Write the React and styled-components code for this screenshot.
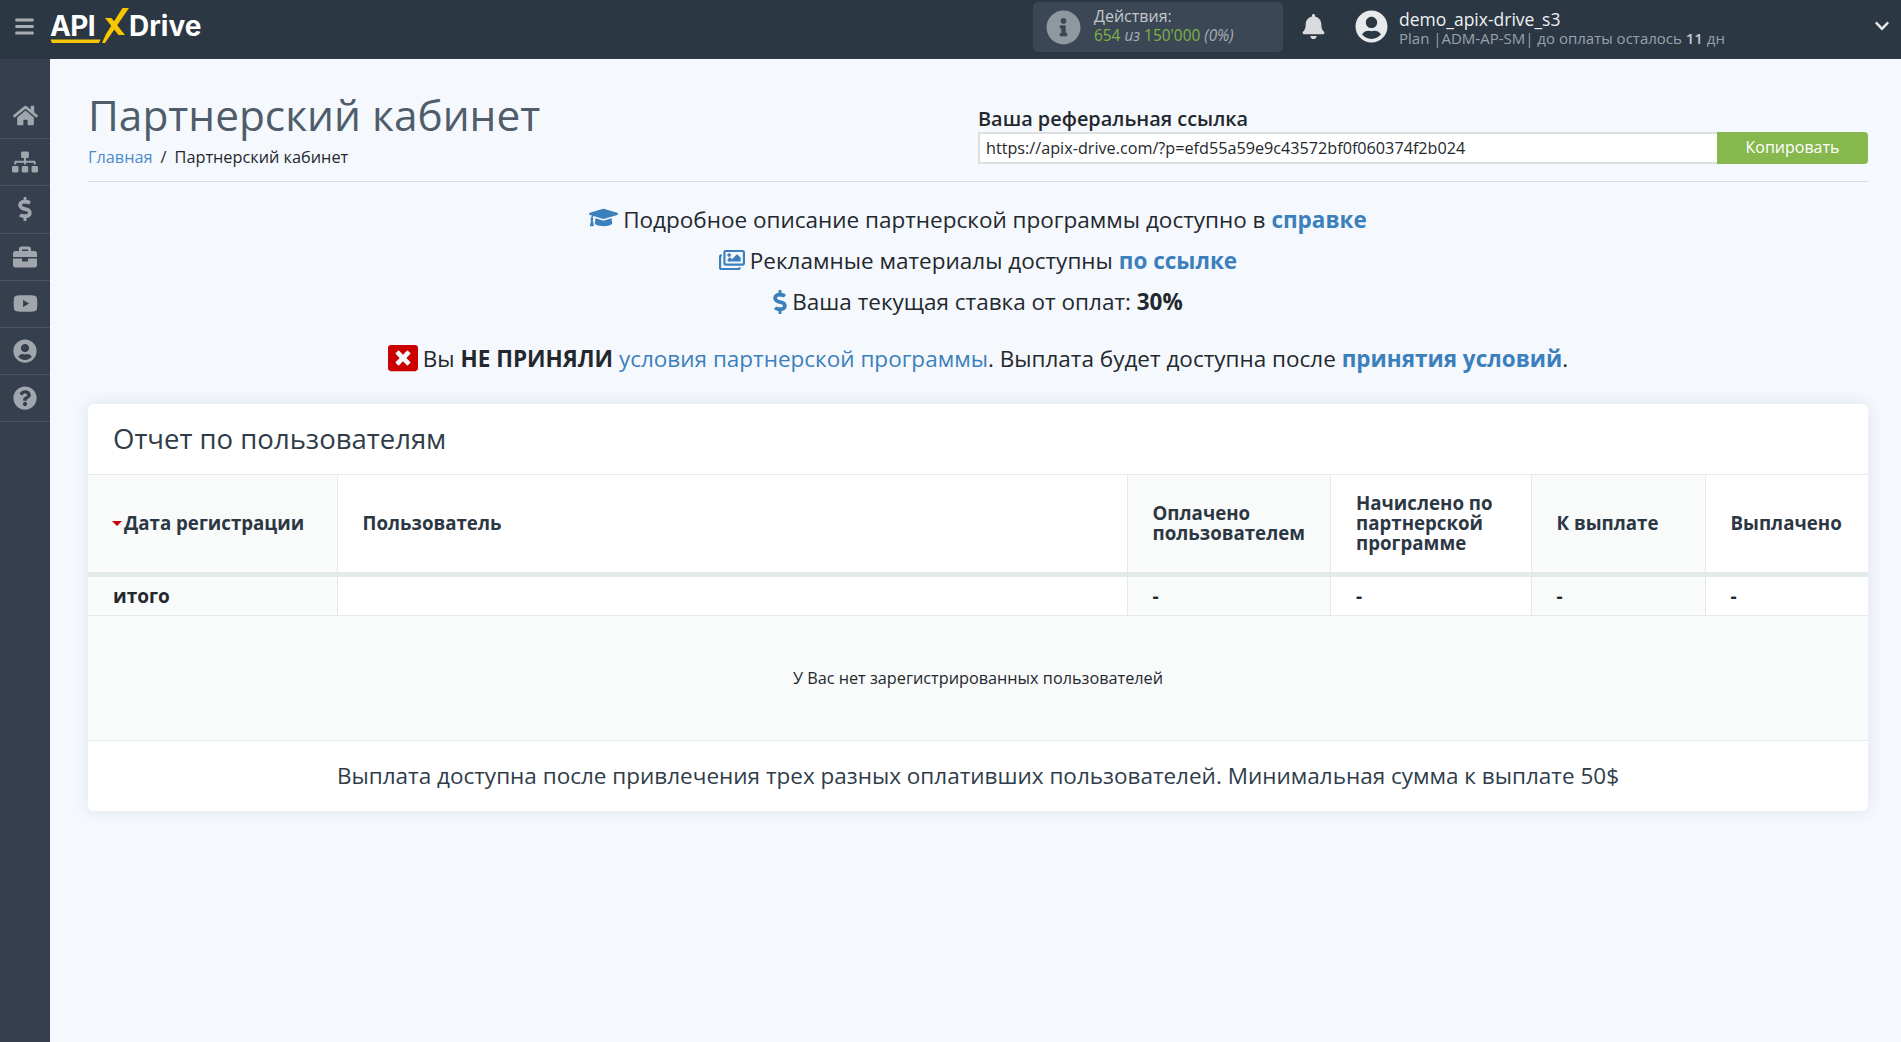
import React from "react";
import styled, { createGlobalStyle } from "styled-components";
import {
  FaBars, FaBell, FaBriefcase, FaChevronDown, FaDollarSign, FaGraduationCap, FaHome, FaInfoCircle,
  FaQuestionCircle, FaRegImages, FaSitemap, FaUserCircle, FaWindowClose, FaYoutube,
} from "react-icons/fa";

const Global = createGlobalStyle`
  html, body { margin: 0; padding: 0; height: 100%; }
  body { font-family: "Open Sans", "Noto Sans", sans-serif; background: #f5f8fd; color: #23282e; }
  * { box-sizing: border-box; }
`;

const Page = styled.div`display: flex; flex-direction: column; width: 1901px; height: 1042px; overflow: hidden;`;
const Header = styled.header`display: flex; align-items: center; height: 59px; flex: none; background: #2c3744; color: #fff;`;
const Burger = styled.div`width: 50px; display: flex; justify-content: center; color: #a8adb3; font-size: 21px; margin-top: -6px; padding-right: 2px;`;
const Logo = styled.div`position: relative; display: flex; align-items: center; width: 152px; height: 59px; font-family: Inter, "Open Sans", sans-serif; font-weight: 700; font-size: 28px; letter-spacing: -0.6px; color: #fff;`;
const LogoApi = styled.span`margin-top: -7px; margin-left: 0;`;
const LogoDrive = styled.span`position: absolute; left: 79px; top: 9px; letter-spacing: 0;`;
const LogoMark = styled.svg`position: absolute; left: 0; top: 7px;`;
const HeaderRight = styled.div`display: flex; align-items: center; margin-left: auto; height: 59px; flex: 1;`;
const Actions = styled.div`display: flex; align-items: center; width: 250px; height: 50px; margin-left: 831px; margin-top: -5px; padding-left: 13px; background: #3b4754; border-radius: 5px;`;
const ActionIcon = styled.div`font-size: 35px; color: #8f979f; display: flex; margin-right: 13px;`;
const TwoLines = styled.div`display: flex; flex-direction: column;`;
const ActionsText = styled(TwoLines)`margin-top: -2px;`;
const ActionsLabel = styled.span`font-size: 16px; line-height: 20px; color: #c3c8cc;`;
const ActionsValue = styled.span`font-size: 15.4px; line-height: 20px; color: #7eb344; white-space: nowrap;`;
const Muted = styled.em`color: #a5adb5;`;
const Bell = styled.div`margin-left: 18px; margin-top: -6px; font-size: 25px; color: #d9dbde; display: flex;`;
const Avatar = styled.div`margin-left: 29px; margin-top: -6px; font-size: 33px; color: #e8e9ea; display: flex;`;
const User = styled(TwoLines)`margin-left: 11px; margin-top: -3px;`;
const UserName = styled.span`font-size: 17.5px; line-height: 20px; color: #eef0f2; white-space: nowrap;`;
const UserMeta = styled.span`font-size: 15px; line-height: 19px; color: #98a2ac; white-space: nowrap;`;
const UserStrong = styled.b`color: #c5cad0; font-weight: 600;`;
const Chevron = styled.div`margin-left: auto; margin-right: 11px; margin-top: -7px; font-size: 16px; color: #e8e9ea; display: flex;`;

const Body = styled.div`display: flex; flex: 1; min-height: 0;`;
const Sidebar = styled.nav`width: 50px; flex: none; padding-top: 33px; background: #353f4e;`;
const SideItem = styled.a`display: flex; align-items: center; justify-content: center; height: 47.2px; border-bottom: 1px solid #4a5361; color: #a1a6ad; font-size: ${p => p.$size || 24}px;`;
const Main = styled.main`flex: 1; padding: 0 33px 0 38px; min-width: 0;`;
const TopRow = styled.div`display: flex; justify-content: space-between; height: 123px; border-bottom: 1px solid #d8dadd;`;
const Heading = styled.div`padding-top: 27px;`;
const Title = styled.h1`margin: 0; font-size: 42.4px; line-height: 58px; font-weight: 400; color: #4f5d6b;`;
const Crumbs = styled.div`font-size: 16.3px; line-height: 22px; margin-top: 2px; color: #23282e;`;
const CrumbLink = styled.a`color: #4a8cc9;`;
const CrumbSep = styled.span`margin: 0 8px;`;
const RefBlock = styled.div`width: 890px; padding-top: 48px;`;
const RefLabel = styled.div`font-size: 19.9px; line-height: 24px; font-weight: 600; color: #23282e; margin-bottom: 1px;`;
const RefRow = styled.div`display: flex; height: 32px;`;
const RefInput = styled.input`flex: 1; height: 32px; padding: 0 6px; border: 2px solid #dedfe1; border-right: 0; background: #fff; font: 400 16.2px "Open Sans", sans-serif; color: #23282e; outline: none;`;
const CopyButton = styled.button`width: 151px; height: 32px; padding: 0 0 2px; border: 0; border-radius: 0 4px 4px 0; background: #86b84e; color: #fff; font: 400 16px "Open Sans", sans-serif;`;

const InfoBlock = styled.section`padding-top: 17px; text-align: center;`;
const InfoLine = styled.p`margin: 0 0 ${p => p.$gap || 0}px; padding-right: ${p => p.$trim || 0}px; height: 41px; font-size: 22.5px; line-height: 41px; color: #23282e; white-space: nowrap;`;
const InfoIcon = styled.span`display: inline-block; vertical-align: ${p => p.$drop || -4}px; margin-right: ${p => p.$space ?? 5}px; color: ${p => p.$color || "#3b80bd"}; font-size: ${p => p.$size || 26}px; line-height: 1;`;
const LinkText = styled.a`color: #3b80bd;`;
const LinkStrong = styled(LinkText)`font-weight: 700;`;

const Card = styled.section`margin-top: 25px; background: #fff; border-radius: 6px; box-shadow: 0 0 16px rgba(60, 80, 120, 0.12); overflow: hidden;`;
const CardTitle = styled.h2`margin: 0; height: 71px; padding-left: 25px; font-size: 27.5px; line-height: 70px; font-weight: 400; color: #2f3c49; border-bottom: 1px solid #e6e9ea;`;
const Table = styled.table`width: 100%; border-collapse: collapse; table-layout: fixed;`;
const Th = styled.th`width: ${p => p.$w}px; height: 99px; padding: 0 0 0 25px; border-right: 1px solid #e6e9ea; border-bottom: 5px solid #e3ebe9; background: ${p => p.$shade ? "#f9fafa" : "#fff"}; font-size: 18.7px; line-height: 20px; font-weight: 700; text-align: left; color: #2c3744; &:last-child { border-right: 0; }`;
const Sort = styled.i`display: inline-block; width: 0; height: 0; margin: 0 2px 4px -1px; border: 5px solid transparent; border-top: 5px solid #c7000b; border-bottom: 0; vertical-align: middle;`;
const Td = styled.td`height: 41px; padding: 0 0 0 25px; border-right: 1px solid #e6e9ea; border-bottom: 1px solid #e6e9ea; background: ${p => p.$shade ? "#f9fafa" : "#fff"}; font-size: 19px; font-weight: 700; color: #23282e; &:last-child { border-right: 0; }`;
const EmptyCell = styled.td`height: 125px; padding: 0; text-align: center; background: #f9fafa; border-bottom: 1px solid #e3ebe9; font-size: 16.25px; color: #23282e;`;
const CardFooter = styled.div`height: 70px; text-align: center; font-size: 22.5px; line-height: 69px; color: #2f3c49;`;

const navItems = [
  [FaHome, 25], [FaSitemap, 26], [FaDollarSign, 24], [FaBriefcase, 24], [FaYoutube, 25], [FaUserCircle, 24], [FaQuestionCircle, 24],
];
const columns = [
  { w: 249, shade: true, label: <><Sort />Дата регистрации</> },
  { w: 790, label: "Пользователь" },
  { w: 203.5, shade: true, label: <>Оплачено<br />пользователем</> },
  { w: 200.5, label: <>Начислено по<br />партнерской<br />программе</> },
  { w: 174, shade: true, label: "К выплате" },
  { w: 163, label: "Выплачено" },
];

export default function App() {
  return (
    <Page>
      <Global />
      <Header>
        <Burger><FaBars /></Burger>
        <Logo>
          <LogoApi>API</LogoApi>
          <LogoDrive>Drive</LogoDrive>
          <LogoMark width="90" height="44" viewBox="0 0 90 44" aria-hidden="true">
            <path d="M0.5 32.5 L50.5 32.5 L49 36 L2 36 Z" fill="#f7c600" />
            <path d="M72.5 1 L79 1 L55 36 L52 36 L56 27 Z" fill="#f7c600" />
            <path d="M55 11 L61.5 11 L75 28 L68.5 28 Z" fill="#f7c600" />
          </LogoMark>
        </Logo>
        <HeaderRight>
          <Actions>
            <ActionIcon><FaInfoCircle /></ActionIcon>
            <ActionsText>
              <ActionsLabel>Действия:</ActionsLabel>
              <ActionsValue>654 <Muted>из</Muted> 150'000 <Muted>(0%)</Muted></ActionsValue>
            </ActionsText>
          </Actions>
          <Bell><FaBell /></Bell>
          <Avatar><FaUserCircle /></Avatar>
          <User>
            <UserName>demo_apix-drive_s3</UserName>
            <UserMeta>Plan |ADM-AP-SM| до оплаты осталось <UserStrong>11</UserStrong> дн</UserMeta>
          </User>
          <Chevron><FaChevronDown /></Chevron>
        </HeaderRight>
      </Header>
      <Body>
        <Sidebar>
          {navItems.map(([Icon, size], i) => (
            <SideItem key={i} $size={size}><Icon /></SideItem>
          ))}
        </Sidebar>
        <Main>
          <TopRow>
            <Heading>
              <Title>Партнерский кабинет</Title>
              <Crumbs><CrumbLink>Главная</CrumbLink><CrumbSep>/</CrumbSep>Партнерский кабинет</Crumbs>
            </Heading>
            <RefBlock>
              <RefLabel>Ваша реферальная ссылка</RefLabel>
              <RefRow>
                <RefInput readOnly value="https://apix-drive.com/?p=efd55a59e9c43572bf0f060374f2b024" />
                <CopyButton>Копировать</CopyButton>
              </RefRow>
            </RefBlock>
          </TopRow>
          <InfoBlock>
            <InfoLine><InfoIcon $size={29}><FaGraduationCap /></InfoIcon>Подробное описание партнерской программы доступно в <LinkStrong>справке</LinkStrong></InfoLine>
            <InfoLine><InfoIcon><FaRegImages /></InfoIcon>Рекламные материалы доступны <LinkStrong>по ссылке</LinkStrong></InfoLine>
            <InfoLine $gap={16} $trim={5}><InfoIcon $size={24} $space={0}><FaDollarSign /></InfoIcon>Ваша текущая ставка от оплат: <b>30%</b></InfoLine>
            <InfoLine><InfoIcon $size={30} $color="#cb0000" $drop={-6}><FaWindowClose /></InfoIcon>Вы <b>НЕ ПРИНЯЛИ</b> <LinkText>условия партнерской программы</LinkText>. Выплата будет доступна после <LinkStrong>принятия условий</LinkStrong>.</InfoLine>
          </InfoBlock>
          <Card>
            <CardTitle>Отчет по пользователям</CardTitle>
            <Table>
              <thead>
                <tr>{columns.map((c, i) => <Th key={i} $w={c.w} $shade={c.shade}>{c.label}</Th>)}</tr>
              </thead>
              <tbody>
                <tr>
                  <Td $shade>итого</Td><Td /><Td $shade>-</Td><Td>-</Td><Td $shade>-</Td><Td>-</Td>
                </tr>
                <tr><EmptyCell colSpan={6}>У Вас нет зарегистрированных пользователей</EmptyCell></tr>
              </tbody>
            </Table>
            <CardFooter>Выплата доступна после привлечения трех разных оплативших пользователей. Минимальная сумма к выплате 50$</CardFooter>
          </Card>
        </Main>
      </Body>
    </Page>
  );
}
